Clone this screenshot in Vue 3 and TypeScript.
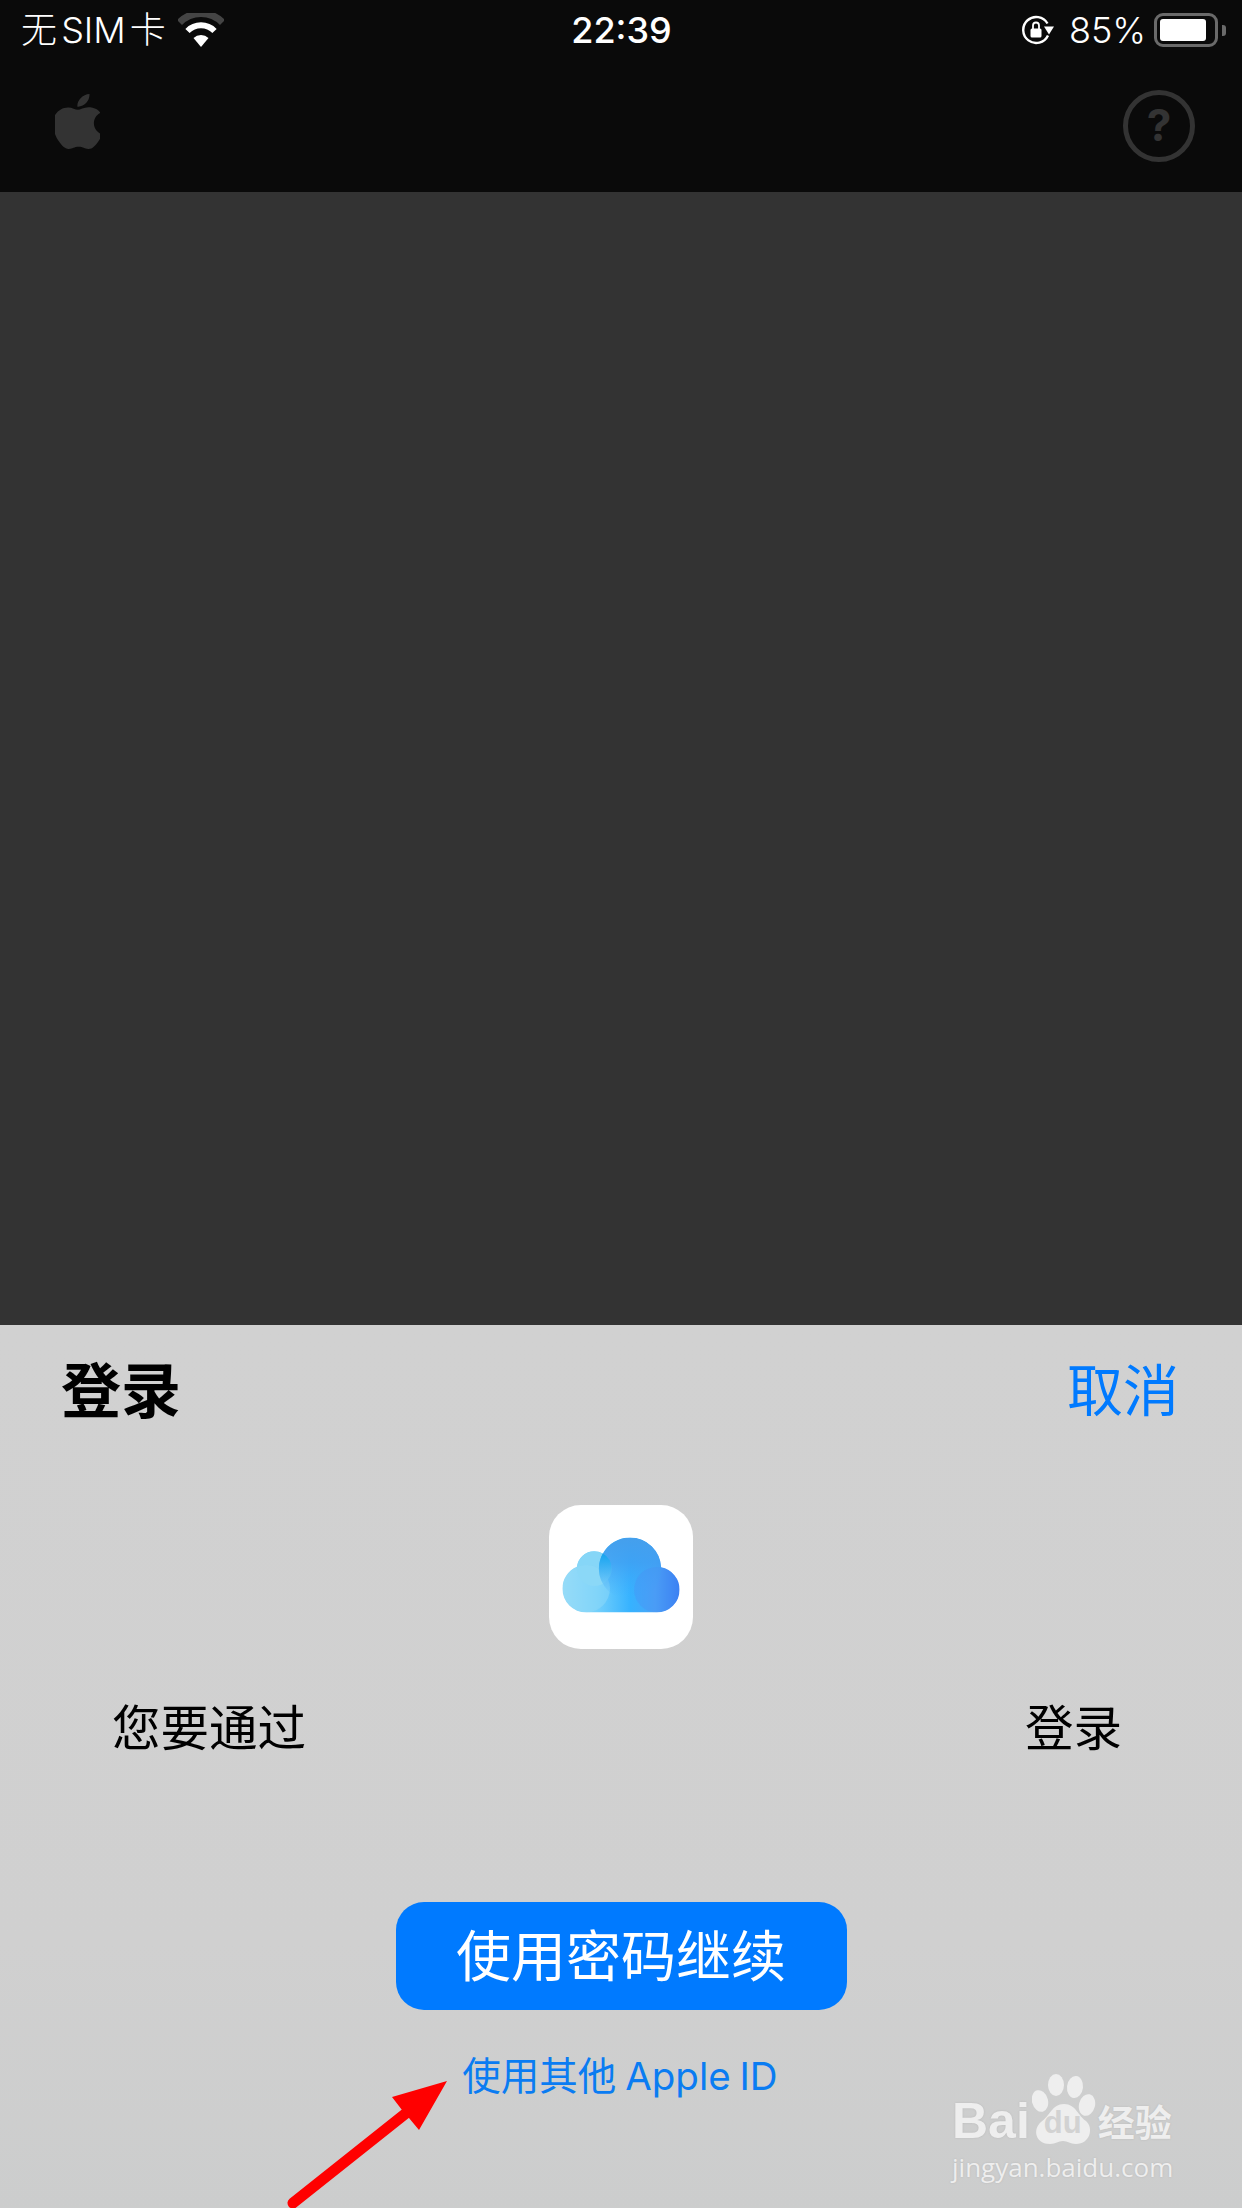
<script setup lang="ts">
// 底部弹层里的几段文字
const sheetTitle = '登录'
const cancelText = '取消'
const buttonText = '使用密码继续'
const otherIdText = '使用其他 Apple ID'
const applePath =
  'M12.152 6.896c-.948 0-2.415-1.078-3.96-1.04-2.04.027-3.91 1.183-4.961 3.014-2.117 3.675-.546 9.103 1.519 12.09 1.013 1.454 2.208 3.09 3.792 3.039 1.52-.065 2.09-.987 3.935-.987 1.831 0 2.35.987 3.96.948 1.637-.026 2.676-1.48 3.676-2.948 1.156-1.688 1.636-3.325 1.662-3.415-.039-.013-3.182-1.221-3.22-4.857-.026-3.04 2.48-4.494 2.597-4.559-1.429-2.09-3.623-2.324-4.39-2.376-2-.156-3.675 1.09-4.61 1.09zM15.53 3.83c.843-1.012 1.4-2.427 1.245-3.83-1.207.052-2.662.805-3.532 1.818-.78.896-1.454 2.338-1.273 3.714 1.338.104 2.715-.688 3.559-1.701'
</script>

<template>
  <div class="screen">
    <div class="status-bar">
      <div class="status-left">
        <span class="carrier">无 SIM 卡</span>
        <svg class="wifi" width="46" height="34" viewBox="0 0 46 34">
          <path d="M1.5 9.5 A30 30 0 0 1 44.5 9.5" fill="none" stroke="#444" stroke-width="7" />
          <path d="M9.5 18 A19 19 0 0 1 36.5 18" fill="none" stroke="#fff" stroke-width="6" />
          <path d="M15.5 25 L23 34 L30.5 25 A11 11 0 0 0 15.5 25 Z" fill="#fff" />
        </svg>
      </div>
      <span class="clock">22:39</span>
      <div class="status-right">
        <svg class="rotation" width="32" height="30" viewBox="0 0 32 30">
          <path d="M26 20.5 A13 13 0 1 1 25.5 8.5" fill="none" stroke="#fff" stroke-width="2.4" />
          <path d="M22 11.5 L32 11.5 L27 19.5 Z" fill="#fff" />
          <rect x="8.5" y="13.5" width="11" height="9" rx="1.5" fill="#fff" />
          <path d="M11 14 V10.5 A3 3 0 0 1 17 10.5 V14" fill="none" stroke="#fff" stroke-width="1.8" />
        </svg>
        <span class="percent">85%</span>
        <div class="battery"><div class="battery-fill"></div></div>
        <div class="battery-nub"></div>
      </div>
    </div>

    <div class="top-bar">
      <svg class="apple" width="45" height="55" viewBox="3 0 18 24" preserveAspectRatio="none">
        <path :d="applePath" fill="#333" />
      </svg>
      <div class="help">?</div>
    </div>

    <div class="dim-area"></div>

    <div class="sheet">
      <div class="sheet-head">
        <span class="sheet-title">{{ sheetTitle }}</span>
        <span class="sheet-cancel">{{ cancelText }}</span>
      </div>

      <div class="app-icon">
        <svg width="144" height="144" viewBox="148 75 430 430">
          <defs>
            <linearGradient id="cloudBase" x1="0" y1="0" x2="1" y2="0">
              <stop offset="0" stop-color="#a0def8" />
              <stop offset="0.3" stop-color="#74d0fb" />
              <stop offset="0.58" stop-color="#36b2ff" />
              <stop offset="0.78" stop-color="#4aa4f7" />
              <stop offset="1" stop-color="#3375f2" />
            </linearGradient>
            <linearGradient id="cloudTop" x1="0" y1="0" x2="0" y2="1">
              <stop offset="0" stop-color="#459fec" />
              <stop offset="0.4" stop-color="#3f9ff2" stop-opacity="0.8" />
              <stop offset="0.95" stop-color="#3da8fa" stop-opacity="0" />
            </linearGradient>
            <linearGradient id="cloudLens" x1="0" y1="0" x2="0" y2="1">
              <stop offset="0" stop-color="#14a4ee" />
              <stop offset="1" stop-color="#5cc6fb" stop-opacity="0.3" />
            </linearGradient>
            <clipPath id="cloudClip">
              <circle cx="390" cy="265" r="93" />
              <circle cx="283" cy="265" r="52" />
              <circle cx="259" cy="325" r="71" />
              <circle cx="470" cy="328" r="68" />
              <rect x="259" y="290" width="211" height="106" />
            </clipPath>
          </defs>
          <g clip-path="url(#cloudClip)">
            <rect x="180" y="165" width="365" height="235" fill="url(#cloudBase)" />
            <circle cx="283" cy="265" r="52" fill="#86d6f7" />
            <circle cx="259" cy="325" r="71" fill="#8fd9f8" opacity="0.5" />
            <circle cx="390" cy="265" r="93" fill="url(#cloudTop)" />
            <path d="M308.7 219.8 A52 52 0 0 1 308.7 310.2 A93 93 0 0 1 308.7 219.8 Z" fill="url(#cloudLens)" />
            <circle cx="470" cy="328" r="68" fill="#4b8ff3" opacity="0.35" />
          </g>
        </svg>
      </div>

      <div class="prompt">
        <span>您要通过</span>
        <span>登录</span>
      </div>

      <div class="primary-btn">{{ buttonText }}</div>
      <div class="other-id">{{ otherIdText }}</div>

      <!-- 红色标注箭头 -->
      <svg class="arrow" width="170" height="135" viewBox="285 2078 170 135">
        <path d="M293 2203 L405 2114" stroke="#ff0000" stroke-width="11" stroke-linecap="round" fill="none" />
        <path d="M447 2081 L392 2097 L402 2110 L409 2118 L419 2130 Z" fill="#ff0000" />
      </svg>

      <!-- 水印 -->
      <div class="watermark">
        <div class="mark-row">
          <span class="mark-bai">Bai</span>
          <div class="paw">
            <svg width="64" height="72" viewBox="0 0 64 72">
              <ellipse cx="8" cy="27" rx="8" ry="11" fill="#eee" transform="rotate(-15 8 27)" />
              <ellipse cx="24" cy="11" rx="8" ry="11" fill="#eee" />
              <ellipse cx="43" cy="13" rx="8" ry="11" fill="#eee" transform="rotate(6 43 13)" />
              <ellipse cx="55" cy="31" rx="8" ry="11" fill="#eee" transform="rotate(15 55 31)" />
              <path d="M32 30 C44 30 46 42 54 47 C62 54 58 70 44 70 C38 70 36 67 31 67 C26 67 24 70 18 70 C4 70 0 56 9 48 C18 42 20 30 32 30 Z" fill="#eee" />
            </svg>
            <span class="mark-du">du</span>
          </div>
          <span class="mark-cn">经验</span>
        </div>
        <div class="mark-url">jingyan.baidu.com</div>
      </div>
    </div>
  </div>
</template>

<style scoped>
.screen {
  position: relative;
  width: 1242px;
  height: 2208px;
  display: flex;
  flex-direction: column;
  overflow: hidden;
  font-family: Inter, "Noto Sans CJK SC", sans-serif;
  background: #333;
}

.status-bar {
  height: 60px;
  padding: 0 16px 0 21px;
  display: grid;
  grid-template-columns: 1fr auto 1fr;
  align-items: center;
  background: #0a0a0a;
  color: #fff;
}

.status-left {
  display: flex;
  align-items: center;
  gap: 12px;
}

.carrier {
  font-size: 36px;
  font-weight: 300;
  line-height: 40px;
  word-spacing: -6px;
}

.wifi {
  display: block;
  margin-top: -1px;
}

.clock {
  font-size: 36px;
  font-weight: 500;
  line-height: 40px;
  margin-right: 4px;
}

.status-right {
  display: flex;
  align-items: center;
  justify-content: flex-end;
}

.rotation {
  display: block;
  margin-right: 15px;
}

.percent {
  font-size: 36px;
  font-weight: 300;
  line-height: 40px;
  margin-right: 8px;
}

.battery {
  width: 64px;
  height: 34px;
  box-sizing: border-box;
  padding: 3px;
  border: 3px solid #6a6a6a;
  border-radius: 9px;
}

.battery-fill {
  width: 46px;
  height: 22px;
  background: #fff;
  border-radius: 3px;
}

.battery-nub {
  width: 4px;
  height: 11px;
  margin-left: 4px;
  background: #6a6a6a;
  border-radius: 0 3px 3px 0;
}

.top-bar {
  height: 132px;
  padding: 0 47px 0 55px;
  display: flex;
  align-items: center;
  justify-content: space-between;
  background: #0a0a0a;
}

.apple {
  display: block;
  margin-top: -9px;
}

.help {
  width: 72px;
  height: 72px;
  box-sizing: border-box;
  border: 5px solid #333;
  border-radius: 50%;
  color: #333;
  font-size: 44px;
  font-weight: 700;
  line-height: 60px;
  text-align: center;
}

.dim-area {
  height: 1133px;
  background: #333;
}

.sheet {
  position: relative;
  flex: 1;
  display: flex;
  flex-direction: column;
  align-items: center;
  background: linear-gradient(#d1d1d1, #d0d0d0 70%, #cccdcd);
}

.sheet-head {
  width: 100%;
  box-sizing: border-box;
  margin-top: 34px;
  padding: 0 63px 0 61px;
  display: flex;
  justify-content: space-between;
  align-items: center;
}

.sheet-title {
  font-size: 60px;
  font-weight: 700;
  line-height: 64px;
  color: #000;
}

.sheet-cancel {
  font-size: 56px;
  line-height: 64px;
  color: #007aff;
}

.app-icon {
  width: 144px;
  height: 144px;
  margin-top: 82px;
  background: #fff;
  border-radius: 32px;
  overflow: hidden;
}

.app-icon svg {
  display: block;
}

.prompt {
  width: 100%;
  box-sizing: border-box;
  margin-top: 52px;
  padding: 0 120px 0 112px;
  display: flex;
  justify-content: space-between;
  font-size: 48.5px;
  line-height: 56px;
  color: #000;
}

.primary-btn {
  width: 451px;
  height: 108px;
  margin-top: 145px;
  background: #007aff;
  border-radius: 28px;
  color: #fff;
  font-size: 55px;
  line-height: 108px;
  text-align: center;
}

.other-id {
  margin-top: 42px;
  margin-right: 2px;
  font-size: 38.5px;
  line-height: 48px;
  word-spacing: -2px;
  color: #0a7cf2;
}

.arrow {
  position: absolute;
  left: 285px;
  top: 753px;
}

.watermark {
  position: absolute;
  left: 952px;
  top: 749px;
  width: 230px;
  color: #eee;
  text-shadow: 0 0 2px #b5b5b5;
}

.mark-row {
  display: flex;
  align-items: flex-end;
  height: 72px;
}

.mark-bai {
  font-family: "Liberation Sans", sans-serif;
  font-size: 50px;
  font-weight: 700;
  line-height: 50px;
  margin-right: 2px;
}

.paw {
  position: relative;
  width: 64px;
  height: 72px;
  flex-shrink: 0;
}

.paw svg {
  display: block;
}

.mark-du {
  position: absolute;
  left: 12px;
  top: 33px;
  font-family: "Liberation Sans", sans-serif;
  font-size: 31px;
  font-weight: 700;
  line-height: 32px;
  color: #d2d2d2;
  text-shadow: none;
}

.mark-cn {
  font-size: 37px;
  font-weight: 700;
  line-height: 44px;
  margin-left: 2px;
  white-space: nowrap;
}

.mark-url {
  margin-top: 4px;
  font-family: "Open Sans", sans-serif;
  font-size: 26px;
  line-height: 34px;
  white-space: nowrap;
}
</style>

<style>
html,
body {
  margin: 0;
  background: #333;
}
</style>
